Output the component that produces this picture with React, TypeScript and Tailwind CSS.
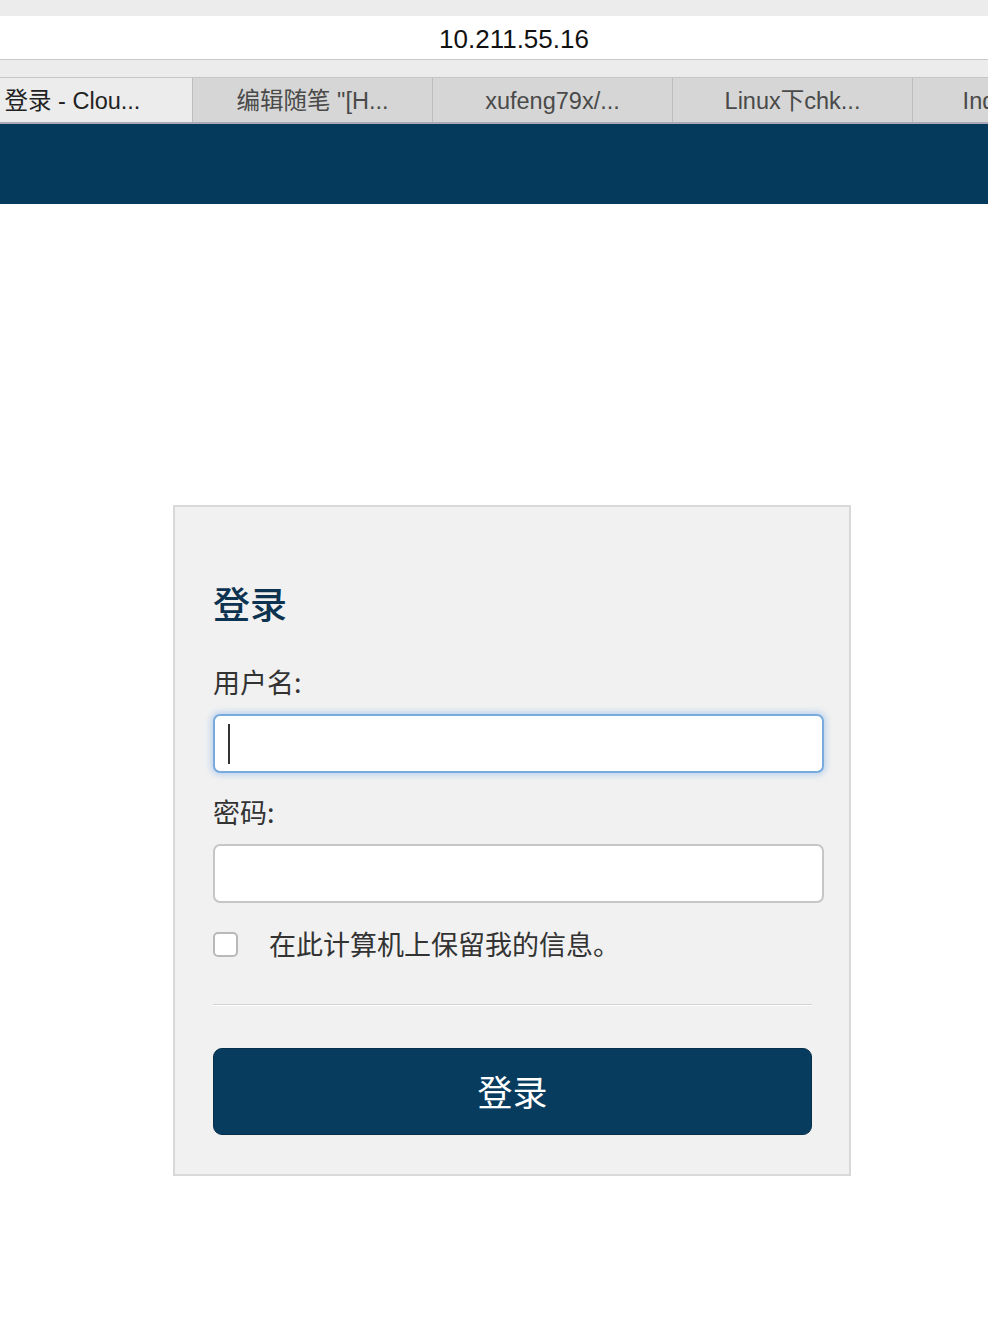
import React from "react";

const cjk = { fontFamily: '"Noto Sans CJK SC", "Liberation Sans", sans-serif' };
const latin = { fontFamily: '"Liberation Sans", "Noto Sans CJK SC", sans-serif' };

const tabs = [
  { label: "登录 - Clou...", active: true },
  { label: "编辑随笔 \"[H...", active: false },
  { label: "xufeng79x/...", active: false },
  { label: "Linux下chk...", active: false },
  { label: "Index of /lib...", active: false },
];

export default function App() {
  return (
    <div className="w-[988px] min-h-[1320px] bg-white" style={cjk}>
      {/* browser chrome */}
      <div className="bg-[#ececec] pt-[16px]">
        <div className="h-[44px] bg-white border-b border-[#c9c9c9] flex items-center justify-center pl-[40px] pt-[3px]">
          <span className="text-[26px] text-[#111] leading-none" style={latin}>10.211.55.16</span>
        </div>
        <div className="h-[17px]" />
        <div className="h-[47px] border-t border-[#c6c6c6] border-b-2 border-b-[#a9a9b8] overflow-hidden">
          <div className="flex -ml-[47px] h-full">
            {tabs.map((t, i) => (
              <div
                key={i}
                className={
                  "w-[240px] shrink-0 h-full flex items-center justify-center pt-[3px] text-[23.5px] border-r border-[#bdbdbd] overflow-hidden whitespace-nowrap " +
                  (t.active ? "bg-[#ececec] text-[#222]" : "bg-[#d6d6d6] text-[#4a4a4a]")
                }
                style={latin}
              >
                {t.label}
              </div>
            ))}
          </div>
        </div>
      </div>
      {/* header */}
      <div className="h-[80px] bg-[#053a5c]" />
      {/* main */}
      <div className="pt-[301px] pb-[140px]">
        <div className="ml-[173px] w-[678px] bg-[#f1f1f1] border-2 border-[#d9d9d9] pl-[38px] pr-[26px] pt-[76px] pb-[39px]">
          <h1 className="text-[37px] leading-[40px] text-[#0e3350] font-medium">登录</h1>
          <div className="mt-[43px] text-[27px] leading-[32px] text-[#333]">用户名:</div>
          <div className="mt-[16px] h-[59px] w-[611px] rounded-[7px] bg-white border-2 border-[#78aadd] shadow-[0_0_6px_2px_rgba(120,170,230,0.45)] flex items-center pl-[13px]">
            <div className="w-[2px] h-[40px] bg-[#333]" />
          </div>
          <div className="mt-[23px] text-[27px] leading-[32px] text-[#333]">密码:</div>
          <div className="mt-[16px] h-[59px] w-[611px] rounded-[7px] bg-white border-2 border-[#c6c6c6]" />
          <div className="mt-[25px] h-[32px] flex items-center">
            <div className="w-[25px] h-[25px] rounded-[5px] bg-white border-2 border-[#b9b9b9]" />
            <span className="ml-[31px] text-[27px] leading-[32px] text-[#333]">在此计算机上保留我的信息。</span>
          </div>
          <div className="mt-[44px] w-[599px] h-[2px] bg-[#d3d3d3] border-b border-white" />
          <button className="mt-[42px] w-[599px] h-[87px] rounded-[9px] bg-[#083c5f] border border-[#06304c] text-white text-[35px] flex items-center justify-center" style={cjk}>
            登录
          </button>
        </div>
      </div>
    </div>
  );
}
